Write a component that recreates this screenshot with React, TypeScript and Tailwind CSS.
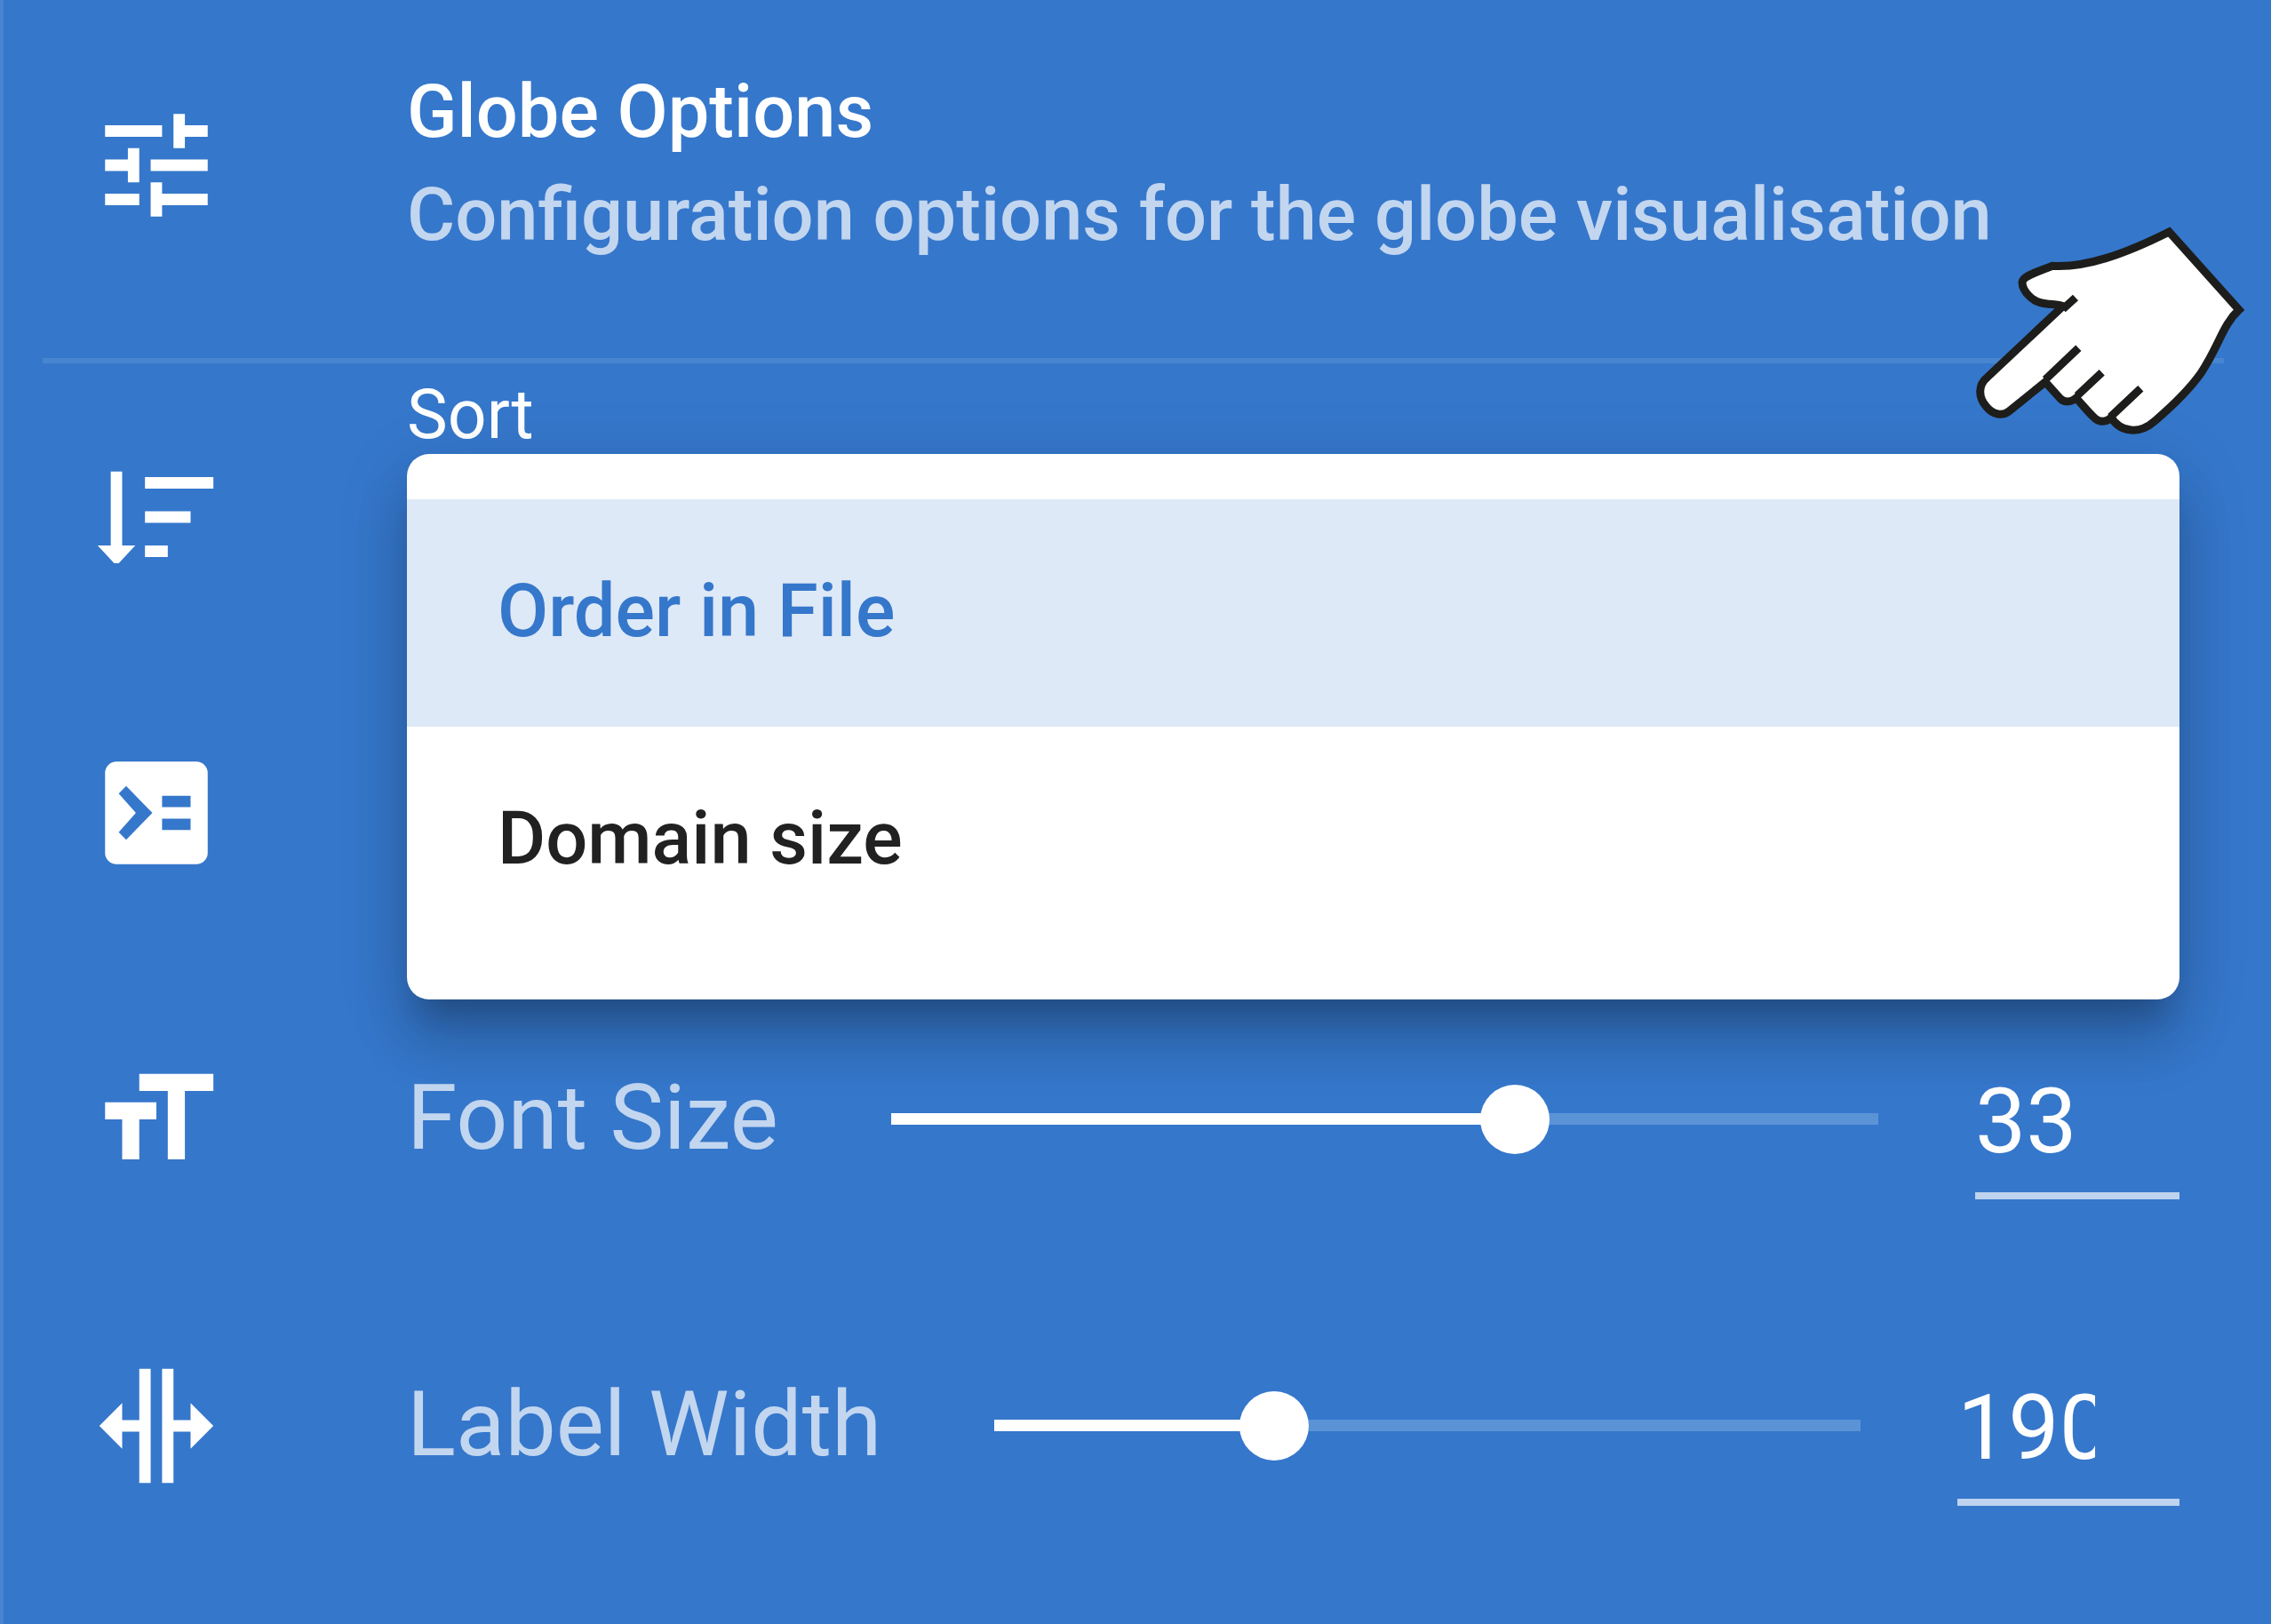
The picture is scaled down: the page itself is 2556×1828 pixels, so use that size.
import { useState } from "react";
import type { ReactNode } from "react";

const ICONS = {
  tune: "M3 17v2h6v-2H3M3 5v2h10V5H3m10 16v-2h8v-2h-8v-2h-2v6h2M7 9v2H3v2h4v2h2V9H7m14 4v-2H11v2h10m-6-4h2V7h4V5h-4V3h-2v6z",
  sort: "M10 13v-2h8v2h-8m0 6v-2h4v2h-4m0-12V5h12v2H10M6 17h2.3L5.4 20.1H4.6L1.7 17H4V4h2v13z",
  label:
    "M5 3h14a2 2 0 0 1 2 2v14a2 2 0 0 1-2 2H5a2 2 0 0 1-2-2V5a2 2 0 0 1 2-2zM6.7 7.3 5.4 8.6 8.4 12l-3 3.4 1.3 1.3L11.3 12 6.7 7.3zM13 9v2h5V9h-5zm0 4v2h5v-2h-5z",
  fontSize: "M9 4h13v3h-5v12h-3V7H9V4M3 9h9v3H9v7H6v-7H3V9z",
  width: "M9 11H6V8l-4 4 4 4v-3h3v9h2V2H9v9m4-9v20h2v-9h3v3l4-4-4-4v3h-3V2h-2z",
};

function Icon({ name }: { name: keyof typeof ICONS }) {
  return (
    <svg viewBox="0 0 24 24" className="size-[154px] shrink-0" fill="currentColor" fillRule="evenodd" aria-hidden="true">
      <path d={ICONS[name]} />
    </svg>
  );
}

function PointingHand() {
  return (
    <svg
      viewBox="120 90 930 729"
      className="pointer-events-none absolute top-[250px] right-[26px] z-20 h-[243px] w-[310px]"
      fill="none"
      stroke="#1d1d1b"
      strokeWidth="27"
      aria-hidden="true"
    >
      <path
        fill="#fff"
        d="M784 123 1020 386C962 440 955 505 890 602 838 675 770 732 733 764 685 806 622 802 588 750 572 767 548 766 533 752 514 736 496 712 470 684 453 699 427 700 415 684L366 630 244 728C222 746 190 742 166 712 138 680 140 638 170 614L425 374C400 362 345 376 312 340 298 326 288 308 288 293 290 274 325 262 390 238 500 245 630 200 784 123z"
      />
      <path d="M425 384 468 345M366 622 478 515M474 676 557 598M586 748 688 652" />
    </svg>
  );
}

function Row({ icon, children }: { icon: keyof typeof ICONS; children?: ReactNode }) {
  return (
    <div className="flex min-h-[345px] items-center gap-[205px] pr-[103px] pl-[95px]">
      <Icon name={icon} />
      {children}
    </div>
  );
}

type SliderFieldProps = {
  id: string;
  label: string;
  min: number;
  max: number;
  initial: number;
  inputClass: string;
};

function SliderField({ id, label, min, max, initial, inputClass }: SliderFieldProps) {
  const [value, setValue] = useState(initial);
  const filled = ((value - min) / (max - min)) * 100;
  return (
    <div className="flex min-w-0 flex-1 items-center">
      <label htmlFor={id} className="mr-[127px] pb-[4px] text-[102px] leading-[120px] whitespace-nowrap text-white/70">
        {label}
      </label>
      <div className="grid min-w-0 flex-1 items-center">
        <div className="col-start-1 row-start-1 h-[13px] bg-[#5b93d7]">
          <div className="h-full bg-white" style={{ width: `${filled}%` }} />
        </div>
        <input
          id={id}
          type="range"
          min={min}
          max={max}
          value={value}
          onChange={(e) => setValue(Number(e.target.value))}
          className="col-start-1 row-start-1 -mx-[39px] h-[78px] appearance-none bg-transparent outline-none [&::-webkit-slider-thumb]:size-[78px] [&::-webkit-slider-thumb]:appearance-none [&::-webkit-slider-thumb]:rounded-full [&::-webkit-slider-thumb]:bg-white"
        />
      </div>
      <input
        type="number"
        aria-label={`${label} value`}
        value={value}
        onChange={(e) => setValue(Number(e.target.value))}
        className={`ml-[109px] h-[180px] [appearance:textfield] rounded-none border-b-8 border-[#bdd3ee] bg-transparent pt-[32px] pr-[95px] pb-[20px] text-[102px] leading-[120px] text-white outline-none [&::-webkit-inner-spin-button]:appearance-none ${inputClass}`}
      />
    </div>
  );
}

const SORT_OPTIONS = ["Order in File", "Domain size"];

export default function App() {
  const [sort, setSort] = useState(SORT_OPTIONS[0]);
  return (
    <main className="relative min-h-screen overflow-hidden border-l-4 border-[#4885d0] bg-[#3577cb] font-['Roboto',sans-serif] text-white">
      <header className="flex gap-[205px] pt-[68px] pr-[103px] pb-[103px] pl-[95px]">
        <div className="mt-[41px]">
          <Icon name="tune" />
        </div>
        <div className="text-[83px] leading-[116px] font-medium whitespace-nowrap">
          <h1>Globe Options</h1>
          <p className="text-white/70">Configuration options for the globe visualisation</p>
        </div>
      </header>
      <hr className="mr-[53px] ml-[44px] h-[6px] border-0 bg-[#4885d0]" />

      <section className="flex min-h-[333px] gap-[205px] pr-[103px] pl-[95px]">
        <div className="mt-[96px]">
          <Icon name="sort" />
        </div>
        <div className="relative flex-1 pt-[13px]">
          <span id="sort-label" className="block text-[77px] leading-[90px]">
            Sort
          </span>
          <ul
            role="listbox"
            aria-labelledby="sort-label"
            className="absolute inset-x-0 top-[102px] z-10 rounded-[25px] bg-white py-[51px] text-[83px] font-medium shadow-[0_32px_32px_-19px_rgba(0,0,0,0.2),0_51px_60px_4px_rgba(0,0,0,0.14),0_19px_80px_8px_rgba(0,0,0,0.11)]"
          >
            {SORT_OPTIONS.map((option) => (
              <li key={option} role="option" aria-selected={option === sort}>
                <button
                  type="button"
                  onClick={() => setSort(option)}
                  className={`flex h-[256px] w-full items-center px-[102px] pb-[4px] text-left ${
                    option === sort ? "bg-[#dde9f6] text-[#3577cb]" : "text-[#212121]"
                  }`}
                >
                  {option}
                </button>
              </li>
            ))}
          </ul>
        </div>
      </section>

      <Row icon="label" />
      <Row icon="fontSize">
        <SliderField id="font-size" label="Font Size" min={9} max={47} initial={33} inputClass="w-[230px]" />
      </Row>
      <Row icon="width">
        <SliderField id="label-width" label="Label Width" min={90} max={400} initial={190} inputClass="w-[250px]" />
      </Row>
      <PointingHand />
    </main>
  );
}
